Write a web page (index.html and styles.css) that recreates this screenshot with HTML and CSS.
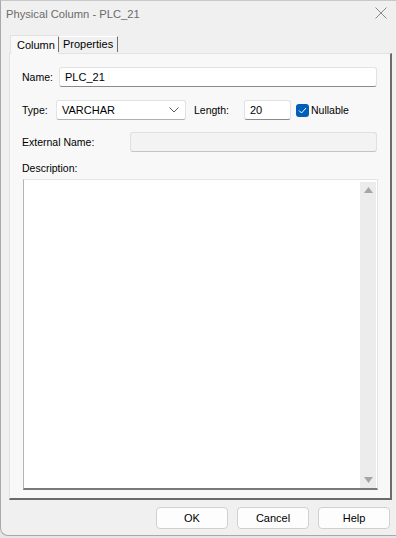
FILE: index.html
```html
<!DOCTYPE html>
<html>
<head>
<meta charset="utf-8">
<link rel="stylesheet" href="styles.css">
</head>
<body>
<div class="window">
  <div class="titlebar">
    <span class="title">Physical Column - PLC_21</span>
    <svg class="close" width="12" height="12" viewBox="0 0 12 12"><path d="M0.5 0.5 L11.5 11.5 M11.5 0.5 L0.5 11.5" stroke="#8a8a8a" stroke-width="1" fill="none"/></svg>
  </div>
  <div class="tabs">
    <div class="tab active">Column</div>
    <div class="tab">Properties</div>
  </div>
  <div class="panel">
    <div class="row r-name">
      <span class="lbl w-name">Name:</span>
      <div class="field grow">PLC_21</div>
    </div>
    <div class="row r-type">
      <span class="lbl w-type">Type:</span>
      <div class="field select">VARCHAR
        <svg class="chev" width="10" height="6" viewBox="0 0 10 6"><path d="M0.5 0.5 L5 5 L9.5 0.5" stroke="#5a5a5a" stroke-width="1" fill="none"/></svg>
      </div>
      <span class="lbl w-len">Length:</span>
      <div class="field len">20</div>
      <span class="check"><svg width="9" height="7" viewBox="0 0 9 7"><path d="M1 3.5 L3.5 6 L8 1" stroke="#fff" stroke-width="1" fill="none"/></svg></span>
      <span class="lbl">Nullable</span>
    </div>
    <div class="row r-ext">
      <span class="lbl w-ext">External Name:</span>
      <div class="field grow disabled"></div>
    </div>
    <div class="lbl desc-lbl">Description:</div>
    <div class="textarea">
      <div class="ta-body"></div>
      <div class="scroll">
        <svg width="9" height="6" viewBox="0 0 9 6"><path d="M0 6 L4.5 0 L9 6 Z" fill="#a6a6a6"/></svg>
        <svg width="9" height="6" viewBox="0 0 9 6"><path d="M0 0 L4.5 6 L9 0 Z" fill="#a6a6a6"/></svg>
      </div>
    </div>
  </div>
  <div class="buttons">
    <div class="btn">OK</div>
    <div class="btn">Cancel</div>
    <div class="btn">Help</div>
  </div>
</div>
</body>
</html>
```
FILE: styles.css
```css
html, body {
  margin: 0;
  padding: 0;
  background: #e6e6e6;
}
body {
  width: 396px;
  height: 538px;
  overflow: hidden;
  font-family: "Liberation Sans", Arial, sans-serif;
  color: #000;
}
.window {
  box-sizing: border-box;
  width: 396px;
  height: 536px;
  background: #f0f0f0;
  border-left: 1px solid #a9a9a9;
  border-bottom: 1px solid #a9a9a9;
  border-top: 1px solid #c8c8c8;
  border-bottom-left-radius: 8px;
  display: flex;
  flex-direction: column;
}
.titlebar {
  height: 26px;
  display: flex;
  align-items: center;
  justify-content: space-between;
  padding: 0 9px 0 5px;
}
.title {
  font-size: 11.2px;
  color: #6b6b6b;
}
.close { display: block; margin-top: -2px; }
.tabs {
  display: flex;
  align-items: flex-end;
  height: 26px;
  padding-left: 9px;
  font-size: 11px;
}
.tab {
  box-sizing: border-box;
  height: 16px;
  line-height: 15px;
  padding: 0 4px;
  border-left: 1px solid #6e6e6e;
  border-right: 1px solid #6e6e6e;
  border-top: 1px solid #fff;
  margin-bottom: 1px;
}
.tab.active {
  height: 19px;
  line-height: 19px;
  width: 48px;
  padding: 0 0 0 6px;
  background: #f8f8f8;
  border-left: 1px solid #e2e2e2;
  border-top: 1px solid #e2e2e2;
  border-right: none;
  margin-bottom: -1px;
  position: relative;
  z-index: 1;
}
.panel {
  box-sizing: border-box;
  width: 383px;
  height: 447px;
  margin-left: 8px;
  background: #f8f8f8;
  border-left: 1px solid #e2e2e2;
  border-top: 1px solid #e2e2e2;
  border-right: 2px solid #6b6b6b;
  border-bottom: 2px solid #6b6b6b;
  padding: 13px 13px 0 12px;
  display: flex;
  flex-direction: column;
  font-size: 10.5px;
}
.row {
  display: flex;
  align-items: center;
  height: 20px;
}
.r-type { margin-top: 13px; }
.r-ext { margin-top: 12px; }
.lbl { white-space: nowrap; }
.w-name { width: 37px; }
.w-type { width: 34px; }
.w-len { width: 50px; margin-left: 8px; }
.w-ext { width: 108px; }
.field {
  box-sizing: border-box;
  height: 20px;
  line-height: 18px;
  background: #fff;
  border: 1px solid #e2e2e2;
  border-bottom: 1px solid #8a8a8a;
  border-radius: 3px;
  padding-left: 5px;
  font-size: 11px;
}
.grow { flex: 1; }
.select {
  width: 130px;
  display: flex;
  align-items: center;
  justify-content: space-between;
  padding-right: 6px;
  border-bottom-color: #b0b0b0;
}
.len { width: 47px; }
.disabled {
  background: #f3f3f3;
  border-color: #e0e0e0;
  border-bottom-color: #c4c4c4;
}
.check {
  width: 13px;
  height: 13px;
  margin: 0 2px 0 5px;
  background: #005fb8;
  border-radius: 3px;
  display: flex;
  align-items: center;
  justify-content: center;
}
.check svg { display: block; }
.desc-lbl { margin-top: 10px; line-height: 13px; }
.textarea {
  box-sizing: border-box;
  margin-top: 4px;
  margin-left: 1px;
  margin-right: -1px;
  height: 311px;
  background: #fff;
  border: 1px solid #e4e4e4;
  border-left-color: #b4b4b4;
  border-bottom: 2px solid #7a7a7a;
  display: flex;
  padding: 2px 1px 0 0;
}
.ta-body { flex: 1; }
.scroll {
  width: 16px;
  background: #ececec;
  display: flex;
  flex-direction: column;
  justify-content: space-between;
  align-items: center;
  padding: 5px 0 5px;
}
.scroll svg { display: block; }
.buttons {
  display: flex;
  justify-content: flex-end;
  gap: 9px;
  padding: 7px 6px 0 0;
}
.btn {
  box-sizing: border-box;
  width: 72px;
  height: 22px;
  line-height: 20px;
  text-align: center;
  font-size: 11px;
  background: #fdfdfd;
  border: 1px solid #d0d0d0;
  border-radius: 4px;
}
```
